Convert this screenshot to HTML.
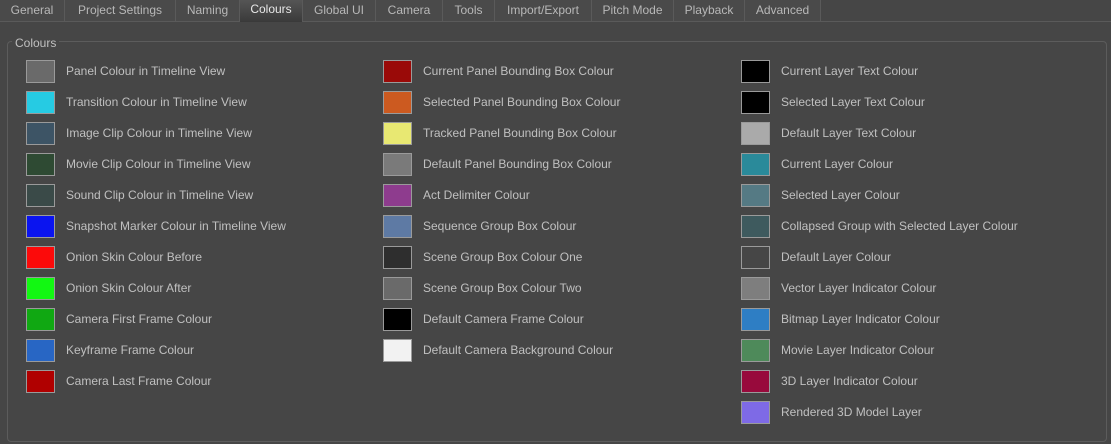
<!DOCTYPE html>
<html><head><style>
body{margin:0;width:1111px;height:444px;background:#464646;font-family:"Liberation Sans",sans-serif;font-size:12px;color:#c0c0c0;position:relative;overflow:hidden}
.tabs{position:absolute;left:0;top:0;width:1111px;height:21px;border-bottom:1px solid #5a5a5a;background:#464646}
.tab{position:absolute;top:0;height:21px;line-height:21px;text-align:center;color:#b8b8b8;border-right:1px solid #5a5a5a;background:#4a4a4a}
.tab.sel{background:linear-gradient(#555,#3a3a3a);color:#e8e8e8;height:22px;line-height:19px}
.grp{position:absolute;left:7px;top:41px;width:1098px;height:399px;border:1px solid #5c5c5c;border-radius:4px}
.gt{position:absolute;left:12px;top:36px;background:#464646;padding:0 3px;color:#c0c0c0}
.sw{position:absolute;width:27px;height:21px;border:1px solid #9a9a9a}
.lb{position:absolute;line-height:23px;white-space:nowrap}
</style></head><body>
<div class="tabs">
<div class="tab" style="left:0;width:64px">General</div>
<div class="tab" style="left:65px;width:110px">Project Settings</div>
<div class="tab" style="left:176px;width:63px">Naming</div>
<div class="tab sel" style="left:240px;width:62px">Colours</div>
<div class="tab" style="left:303px;width:72px">Global UI</div>
<div class="tab" style="left:376px;width:66px">Camera</div>
<div class="tab" style="left:443px;width:51px">Tools</div>
<div class="tab" style="left:495px;width:96px">Import/Export</div>
<div class="tab" style="left:592px;width:81px">Pitch Mode</div>
<div class="tab" style="left:674px;width:70px">Playback</div>
<div class="tab" style="left:745px;width:75px">Advanced</div>
</div>
<div class="grp"></div>
<div class="gt">Colours</div>
<div id="c"></div>
<script>
var cols=[[26,66,[["#6a6a6a","Panel Colour in Timeline View"],["#26cbe3","Transition Colour in Timeline View"],["#3d5465","Image Clip Colour in Timeline View"],["#2e4a33","Movie Clip Colour in Timeline View"],["#3a4a48","Sound Clip Colour in Timeline View"],["#0a14f0","Snapshot Marker Colour in Timeline View"],["#fc0a0a","Onion Skin Colour Before"],["#12f812","Onion Skin Colour After"],["#10a812","Camera First Frame Colour"],["#2866c4","Keyframe Frame Colour"],["#b00000","Camera Last Frame Colour"]]],
[383,423,[["#9a0a08","Current Panel Bounding Box Colour"],["#cc5a20","Selected Panel Bounding Box Colour"],["#e8e872","Tracked Panel Bounding Box Colour"],["#7a7a7a","Default Panel Bounding Box Colour"],["#8e3c8e","Act Delimiter Colour"],["#5e7aa4","Sequence Group Box Colour"],["#2e2e2e","Scene Group Box Colour One"],["#6a6a6a","Scene Group Box Colour Two"],["#000000","Default Camera Frame Colour"],["#f2f2f2","Default Camera Background Colour"]]],
[741,781,[["#000000","Current Layer Text Colour"],["#000000","Selected Layer Text Colour"],["#aaaaaa","Default Layer Text Colour"],["#2a8a9a","Current Layer Colour"],["#557a84","Selected Layer Colour"],["#3e5a5e","Collapsed Group with Selected Layer Colour"],["#464646","Default Layer Colour"],["#7e7e7e","Vector Layer Indicator Colour"],["#2e7ec4","Bitmap Layer Indicator Colour"],["#4e8a5a","Movie Layer Indicator Colour"],["#980a3c","3D Layer Indicator Colour"],["#7e6ae6","Rendered 3D Model Layer"]]]];
var h="";cols.forEach(function(c){c[2].forEach(function(r,i){var y=60+i*31;h+='<div class="sw" style="left:'+c[0]+'px;top:'+y+'px;background:'+r[0]+'"></div><div class="lb" style="left:'+c[1]+'px;top:'+y+'px">'+r[1]+'</div>';});});
document.getElementById("c").innerHTML=h;
</script>
</body></html>
